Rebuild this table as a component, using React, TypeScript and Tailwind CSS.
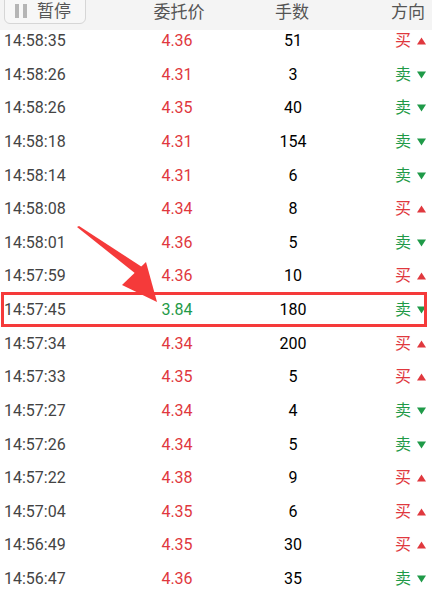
import React from 'react'

type Trade = { time: string; price: string; qty: number; side: 'buy' | 'sell' }

const trades: Trade[] = [
  { time: '14:58:35', price: '4.36', qty: 51, side: 'buy' },
  { time: '14:58:26', price: '4.31', qty: 3, side: 'sell' },
  { time: '14:58:26', price: '4.35', qty: 40, side: 'sell' },
  { time: '14:58:18', price: '4.31', qty: 154, side: 'sell' },
  { time: '14:58:14', price: '4.31', qty: 6, side: 'sell' },
  { time: '14:58:08', price: '4.34', qty: 8, side: 'buy' },
  { time: '14:58:01', price: '4.36', qty: 5, side: 'sell' },
  { time: '14:57:59', price: '4.36', qty: 10, side: 'buy' },
  { time: '14:57:45', price: '3.84', qty: 180, side: 'sell' },
  { time: '14:57:34', price: '4.34', qty: 200, side: 'buy' },
  { time: '14:57:33', price: '4.35', qty: 5, side: 'buy' },
  { time: '14:57:27', price: '4.34', qty: 4, side: 'sell' },
  { time: '14:57:26', price: '4.34', qty: 5, side: 'sell' },
  { time: '14:57:22', price: '4.38', qty: 9, side: 'buy' },
  { time: '14:57:04', price: '4.35', qty: 6, side: 'buy' },
  { time: '14:56:49', price: '4.35', qty: 30, side: 'buy' },
  { time: '14:56:47', price: '4.36', qty: 35, side: 'sell' },
]

const HIGHLIGHT = 8

function SideCell({ side }: { side: Trade['side'] }) {
  const buy = side === 'buy'
  return (
    <div className={`flex items-center gap-[6px] ${buy ? 'text-[#e0383e]' : 'text-[#1f9a48]'}`}>
      <span className="text-[16px]">{buy ? '买' : '卖'}</span>
      <svg width="9" height="8" viewBox="0 0 9 8">
        {buy ? (
          <polygon points="4.5,0.5 9,7.5 0,7.5" fill="currentColor" />
        ) : (
          <polygon points="0,0.5 9,0.5 4.5,7.5" fill="currentColor" />
        )}
      </svg>
    </div>
  )
}

export default function App() {
  return (
    <div
      className="relative w-[432px] h-[594px] overflow-hidden bg-white"
      style={{ fontFamily: 'Roboto, "Noto Sans CJK SC", sans-serif' }}
    >
      {/* header */}
      <div className="flex items-start h-[30px] bg-[#f4f4f4] text-[17px] text-[#555] leading-[24px]">
        <div className="ml-[4px] -mt-[2px] flex items-center gap-[10px] h-[26px] w-[82px] pl-[10px] rounded-b-[6px] border border-[#d6d6d6] bg-[#f7f7f7]">
          <span className="flex gap-[4px]">
            <span className="block w-[4px] h-[14px] bg-[#b5b5b5]" />
            <span className="block w-[4px] h-[14px] bg-[#b5b5b5]" />
          </span>
          <span>暂停</span>
        </div>
        <div className="w-[180px] text-center ml-[3px]">委托价</div>
        <div className="w-[54px] text-center ml-[-4px]">手数</div>
        <div className="flex-1 text-right pr-[7px]">方向</div>
      </div>

      {/* rows */}
      <div>
        {trades.map((t, i) => {
          const red = t.price !== '3.84'
          return (
            <div key={i} className="flex items-start h-[33.625px] leading-[22px]">
              <div className="w-[120px] pl-[4px] text-[16px] text-[#444]">{t.time}</div>
              <div className={`w-[114px] text-center text-[16px] ${red ? 'text-[#e0383e]' : 'text-[#1f9a48]'}`}>
                {t.price}
              </div>
              <div className="w-[118px] text-center text-[16px] text-black">{t.qty}</div>
              <div className="flex-1 flex justify-end pr-[6px]">
                <SideCell side={t.side} />
              </div>
            </div>
          )
        })}
      </div>

      {/* highlight box */}
      <div
        className="absolute left-[1px] w-[426px] h-[35px] border-[3px] border-[#f53a3a]"
        style={{ top: 30 + HIGHLIGHT * 33.625 - 7 }}
      />

      {/* arrow */}
      <svg className="absolute left-0 top-0" width="432" height="594" viewBox="0 0 432 594">
        <polygon points="77,227 136,274 142,267 79,226" fill="#f53a3a" />
        <polygon points="157,302 122,285 146,262" fill="#f53a3a" />
      </svg>
    </div>
  )
}
